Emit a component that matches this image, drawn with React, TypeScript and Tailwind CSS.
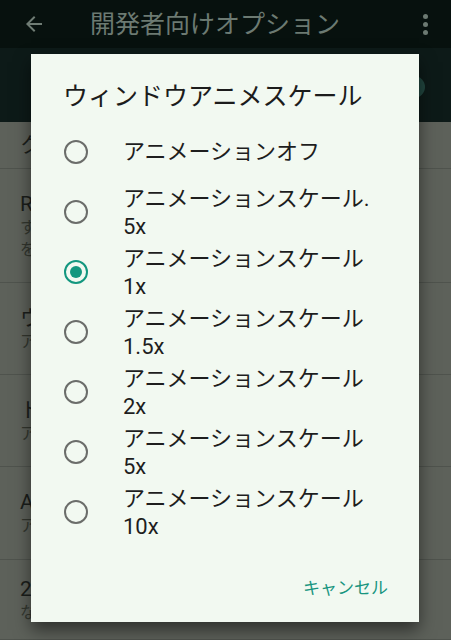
import React from "react";

const options = [
  ["アニメーションオフ"],
  ["アニメーションスケール.", "5x"],
  ["アニメーションスケール", "1x"],
  ["アニメーションスケール", "1.5x"],
  ["アニメーションスケール", "2x"],
  ["アニメーションスケール", "5x"],
  ["アニメーションスケール", "10x"],
];

const bgItems: { h: number; lines: string[] }[] = [
  { h: 47, lines: ["ク"] },
  { h: 114, lines: ["R", "す", "を"] },
  { h: 92, lines: ["ウ", "ア"] },
  { h: 92, lines: ["ト", "ア"] },
  { h: 93, lines: ["A", "ア"] },
  { h: 80, lines: ["2", "なし"] },
];

export default function App() {
  const font = { fontFamily: "Roboto, 'Noto Sans CJK JP', sans-serif" };
  return (
    <div className="relative w-[451px] h-[640px] overflow-hidden bg-[#5d615a]" style={font}>
      {/* top bar */}
      <div className="h-[48px] bg-[#07110e] flex items-center px-[22px]">
        <svg width="24" height="24" viewBox="0 0 24 24" className="text-[#6f7c74]">
          <path d="M20 11H7.8l5.6-5.6L12 4l-8 8 8 8 1.4-1.4L7.8 13H20z" fill="currentColor" />
        </svg>
        <div className="ml-[44px] text-[25px] leading-none text-[#6c7a72]">開発者向けオプション</div>
        <div className="ml-auto mr-[1px] flex flex-col gap-[3px]">
          <span className="w-[5px] h-[5px] rounded-full bg-[#6c7a72]" />
          <span className="w-[5px] h-[5px] rounded-full bg-[#6c7a72]" />
          <span className="w-[5px] h-[5px] rounded-full bg-[#6c7a72]" />
        </div>
      </div>
      {/* switch strip */}
      <div className="h-[74px] bg-[#0d1a18] relative">
        <div className="absolute left-[403px] top-[28px] w-[22px] h-[22px] rounded-full bg-[#21463f]" />
      </div>
      {/* dimmed list */}
      <div className="flex flex-col">
        {bgItems.map((it, i) => (
          <div
            key={i}
            className="border-b border-[#4f534d] pl-[20px] flex flex-col justify-center text-[#1b1e1b]"
            style={{ height: it.h }}
          >
            {it.lines.map((l, j) => (
              <div key={j} className={j === 0 ? "text-[21px] leading-[26px]" : "text-[16px] leading-[22px] text-[#33372f]"}>
                {l}
              </div>
            ))}
          </div>
        ))}
      </div>
      {/* dialog */}
      <div className="absolute left-[31px] top-[54px] w-[388px] h-[568px] bg-[#f2f9f1] shadow-[0_8px_16px_rgba(0,0,0,0.5)] flex flex-col">
        <div className="pt-[27px] pl-[32px] text-[25px] leading-[32px] text-[#1c1c1c]">
          ウィンドウアニメスケール
        </div>
        <div className="mt-[9px] flex flex-col">
          {options.map((o, i) => {
            const checked = i === 2;
            return (
              <div key={i} className="h-[60px] flex items-center pl-[33px]">
                <div
                  className={
                    "w-[24px] h-[24px] rounded-full border-[2.5px] flex items-center justify-center shrink-0 " +
                    (checked ? "border-[#13977f]" : "border-[#6b6d6a]")
                  }
                >
                  {checked && <div className="w-[12px] h-[12px] rounded-full bg-[#13977f]" />}
                </div>
                <div
                  className={
                    "ml-[35px] text-[22px] leading-[28px] text-[#1e1e1e] " + (o.length > 1 ? "pt-[2px]" : "")
                  }
                >
                  {o.map((l, j) => (
                    <div key={j}>{l}</div>
                  ))}
                </div>
              </div>
            );
          })}
        </div>
        <div className="mt-auto mb-[15px] flex justify-end pr-[31px]">
          <div className="h-[36px] flex items-center text-[17px] text-[#18957f]">キャンセル</div>
        </div>
      </div>
    </div>
  );
}
